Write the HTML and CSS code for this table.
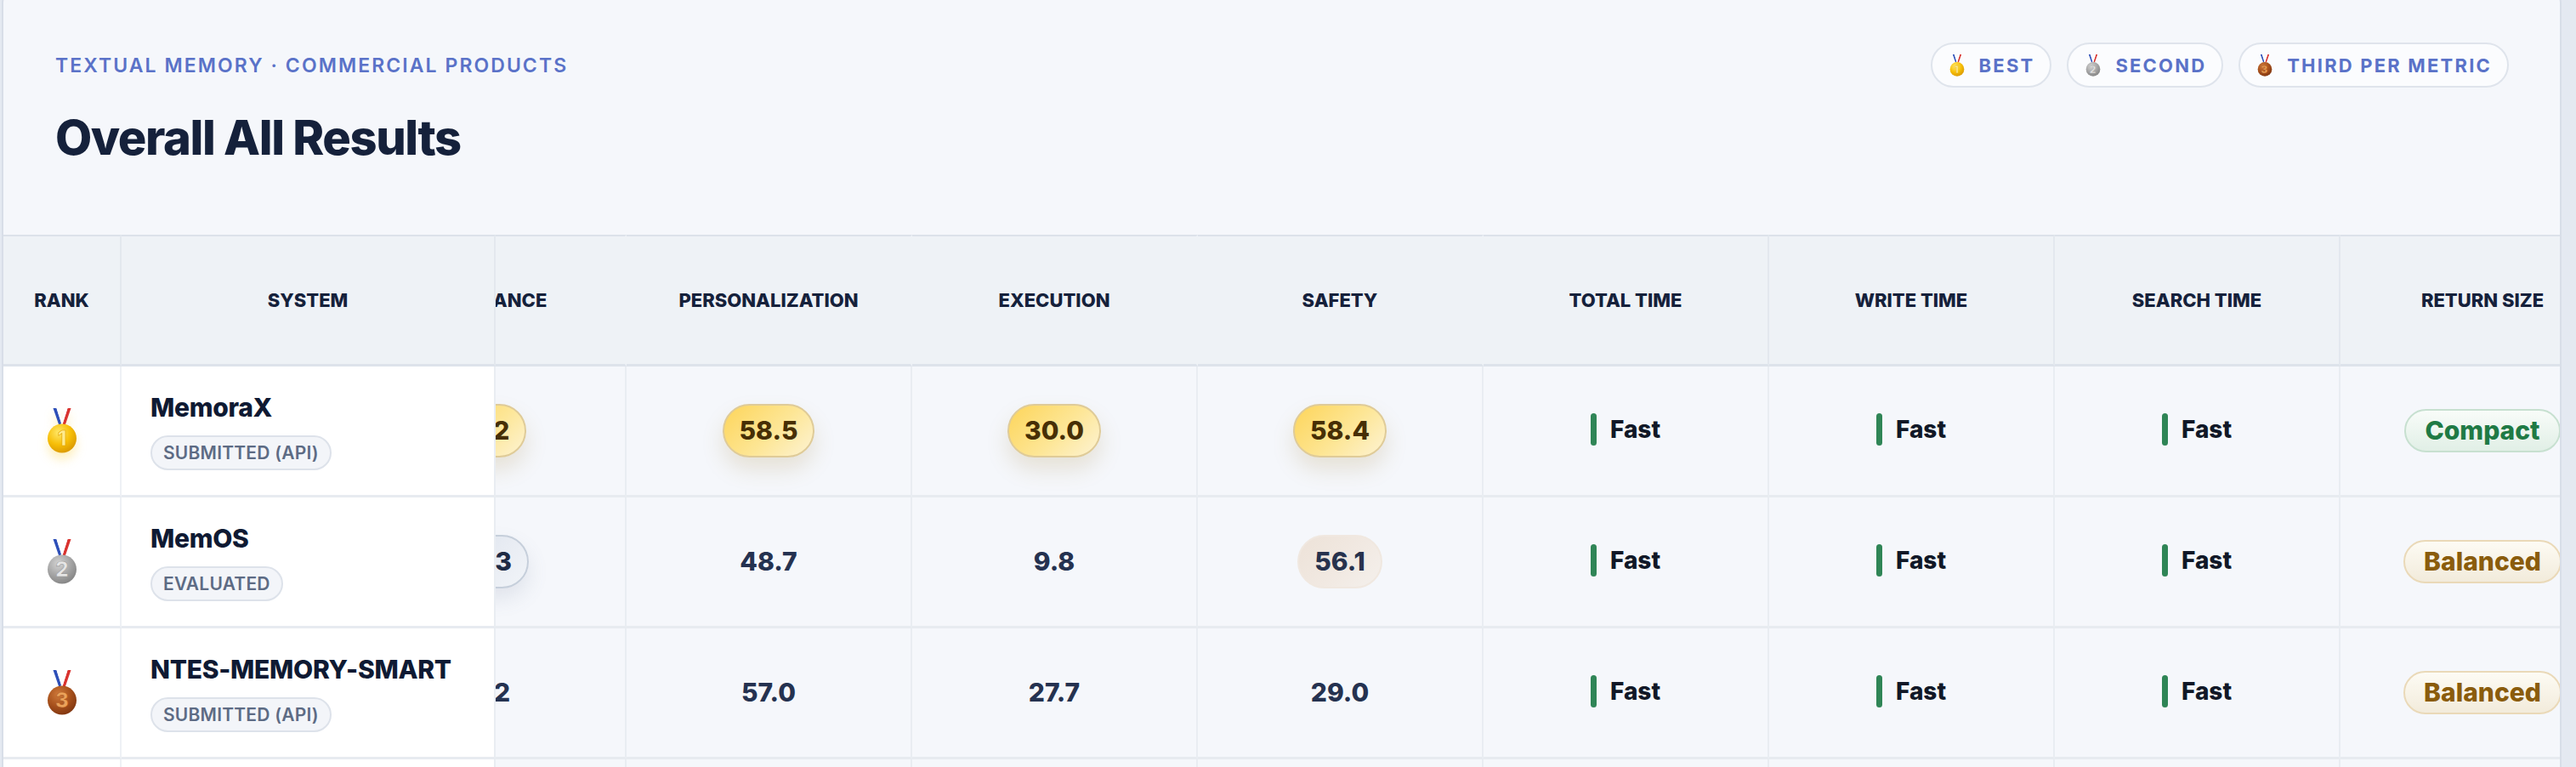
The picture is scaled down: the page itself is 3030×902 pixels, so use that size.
FILE: index.html
```html
<!DOCTYPE html>
<html lang="en">
<head>
<meta charset="utf-8">
<title>Overall All Results</title>
<link rel="stylesheet" href="styles.css">
</head>
<body>
<svg class="defs" aria-hidden="true">
  <defs>
    <radialGradient id="g-gold" cx="38%" cy="30%" r="75%">
      <stop offset="0" stop-color="#ffe86a"/>
      <stop offset="0.55" stop-color="#f7bf08"/>
      <stop offset="1" stop-color="#d99700"/>
    </radialGradient>
    <radialGradient id="g-silver" cx="38%" cy="30%" r="75%">
      <stop offset="0" stop-color="#d4d4d4"/>
      <stop offset="0.55" stop-color="#a6a6a6"/>
      <stop offset="1" stop-color="#838383"/>
    </radialGradient>
    <radialGradient id="g-bronze" cx="38%" cy="30%" r="75%">
      <stop offset="0" stop-color="#d07a3a"/>
      <stop offset="0.55" stop-color="#a7511c"/>
      <stop offset="1" stop-color="#7f3510"/>
    </radialGradient>
    <symbol id="ribbon" viewBox="0 0 36 53">
      <polygon points="7.5,0 11.5,0 17.5,19 14,19" fill="#2d4fb8"/>
      <polygon points="11.5,0 14.5,0 19.5,19 17.5,19" fill="#ffffff"/>
      <polygon points="24.5,0 28.5,0 22,19 18.5,19" fill="#d9332f"/>
      <polygon points="21.5,0 24.5,0 18.5,19 16.5,19" fill="#ffffff"/>
    </symbol>
    <symbol id="medal-1" viewBox="0 0 36 53">
      <use href="#ribbon"/>
      <circle cx="18" cy="35.5" r="17" fill="url(#g-gold)"/>
      <text x="18" y="44" text-anchor="middle" font-family="Inter, sans-serif" font-weight="800" font-size="24" fill="#ffeb8f" stroke="#e0a200" stroke-width="0.6">1</text>
    </symbol>
    <symbol id="medal-2" viewBox="0 0 36 53">
      <use href="#ribbon"/>
      <circle cx="18" cy="35.5" r="17" fill="url(#g-silver)"/>
      <text x="18" y="44" text-anchor="middle" font-family="Inter, sans-serif" font-weight="800" font-size="24" fill="#e6e6e6" stroke="#9a9a9a" stroke-width="0.6">2</text>
    </symbol>
    <symbol id="medal-3" viewBox="0 0 36 53">
      <use href="#ribbon"/>
      <circle cx="18" cy="35.5" r="17" fill="url(#g-bronze)"/>
      <text x="18" y="44" text-anchor="middle" font-family="Inter, sans-serif" font-weight="800" font-size="24" fill="#eba25a" stroke="#b05a22" stroke-width="0.6">3</text>
    </symbol>
  </defs>
</svg>

<section class="card">
  <header class="card-head">
    <div class="head-top">
      <p class="eyebrow">Textual Memory · Commercial Products</p>
      <div class="legend">
        <span class="legend-pill"><svg class="legend-medal"><use href="#medal-1"/></svg>Best</span>
        <span class="legend-pill"><svg class="legend-medal"><use href="#medal-2"/></svg>Second</span>
        <span class="legend-pill"><svg class="legend-medal"><use href="#medal-3"/></svg>Third per metric</span>
      </div>
    </div>
    <h1 class="title">Overall All Results</h1>
  </header>

  <div class="table-wrap" id="tableWrap">
    <table class="board">
      <thead>
        <tr>
          <th class="w-rank sticky-rank">Rank</th>
          <th class="w-sys sticky-sys">System</th>
          <th class="w-metric open">Compliance</th>
          <th class="w-metric open">Personalization</th>
          <th class="w-metric open">Execution</th>
          <th class="w-metric open">Safety</th>
          <th class="w-metric">Total Time</th>
          <th class="w-metric">Write Time</th>
          <th class="w-metric">Search Time</th>
          <th class="w-metric">Return Size</th>
        </tr>
      </thead>
      <tbody>
        <tr>
          <td class="sticky-rank"><svg class="rank-medal gold-glow"><use href="#medal-1"/></svg></td>
          <td class="sticky-sys"><div class="name">MemoraX</div><span class="badge">Submitted (API)</span></td>
          <td><span class="score gold">61.2</span></td>
          <td><span class="score gold">58.5</span></td>
          <td><span class="score gold">30.0</span></td>
          <td><span class="score gold">58.4</span></td>
          <td><span class="speed">Fast</span></td>
          <td><span class="speed">Fast</span></td>
          <td><span class="speed">Fast</span></td>
          <td><span class="size compact">Compact</span></td>
        </tr>
        <tr>
          <td class="sticky-rank"><svg class="rank-medal"><use href="#medal-2"/></svg></td>
          <td class="sticky-sys"><div class="name">MemOS</div><span class="badge">Evaluated</span></td>
          <td><span class="score silver">55.3</span></td>
          <td><span class="score">48.7</span></td>
          <td><span class="score">9.8</span></td>
          <td><span class="score bronze">56.1</span></td>
          <td><span class="speed">Fast</span></td>
          <td><span class="speed">Fast</span></td>
          <td><span class="speed">Fast</span></td>
          <td><span class="size balanced">Balanced</span></td>
        </tr>
        <tr>
          <td class="sticky-rank"><svg class="rank-medal"><use href="#medal-3"/></svg></td>
          <td class="sticky-sys"><div class="name">NTES-MEMORY-SMART</div><span class="badge">Submitted (API)</span></td>
          <td><span class="score">47.2</span></td>
          <td><span class="score">57.0</span></td>
          <td><span class="score">27.7</span></td>
          <td><span class="score">29.0</span></td>
          <td><span class="speed">Fast</span></td>
          <td><span class="speed">Fast</span></td>
          <td><span class="speed">Fast</span></td>
          <td><span class="size balanced">Balanced</span></td>
        </tr>
        <tr>
          <td class="sticky-rank"><span class="rank-num">4</span></td>
          <td class="sticky-sys"><div class="name">Mem0</div><span class="badge">Evaluated</span></td>
          <td><span class="score bronze">52.4</span></td>
          <td><span class="score silver">57.9</span></td>
          <td><span class="score silver">28.6</span></td>
          <td><span class="score">27.5</span></td>
          <td><span class="speed">Fast</span></td>
          <td><span class="speed">Fast</span></td>
          <td><span class="speed">Fast</span></td>
          <td><span class="size balanced">Balanced</span></td>
        </tr>
      </tbody>
    </table>
  </div>
</section>
<script src="script.js"></script>
</body>
</html>
```

FILE: styles.css
```css
* { box-sizing: border-box; }

html, body {
  margin: 0;
  overflow: hidden;
}

body {
  background: #e4e9f1;
  font-family: Inter, "Noto Sans", "Liberation Sans", sans-serif;
  color: #15213b;
}

.defs {
  display: block;
  width: 0;
  height: 0;
  overflow: hidden;
}

.card {
  margin: -20px 17px 0 2px;
  border: 2px solid #d8dee8;
  border-radius: 24px;
  background: #f5f7fb;
  overflow: hidden;
}

.card-head {
  padding: 68px 60px 80px 61px;
}

.head-top {
  display: flex;
  align-items: center;
  justify-content: space-between;
}

.eyebrow {
  margin: 0;
  font-size: 23px;
  line-height: 28px;
  font-weight: 600;
  letter-spacing: 0.09em;
  text-transform: uppercase;
  color: #5a72c8;
}

.legend {
  display: flex;
  gap: 18px;
}

.legend-pill {
  display: flex;
  align-items: center;
  gap: 17px;
  height: 53px;
  padding: 0 18px 0 20px;
  border: 2px solid #dfe4ec;
  border-radius: 999px;
  background: #fbfcfe;
  font-size: 22px;
  font-weight: 700;
  letter-spacing: 0.1em;
  text-transform: uppercase;
  color: #5a72c8;
}

.legend-medal {
  width: 18px;
  height: 26px;
}

.title {
  margin: 26px 0 0;
  font-size: 56px;
  line-height: 1.2;
  font-weight: 800;
  letter-spacing: -0.026em;
  color: #15213b;
}

.table-wrap {
  overflow-x: auto;
  scrollbar-width: none;
}

.table-wrap::-webkit-scrollbar { display: none; }

.board {
  border-collapse: separate;
  border-spacing: 0;
  table-layout: fixed;
  width: 3267px;
}

.board th {
  height: 155px;
  padding: 0 10px;
  background: #eef2f6;
  border-top: 2px solid #dce2ea;
  border-bottom: 3px solid #dde3eb;
  border-right: 2px solid #e3e8ee;
  font-size: 22px;
  font-weight: 800;
  letter-spacing: 0;
  text-transform: uppercase;
  text-align: center;
  vertical-align: middle;
  white-space: nowrap;
  color: #15213b;
}

.board th.open {
  border-right-color: #eef2f6;
}

.w-rank { width: 139px; }
.w-sys { width: 440px; }
.w-metric { width: 336px; }

.board td {
  height: 154px;
  padding: 0 10px;
  background: #f5f7fb;
  border-bottom: 3px solid #e7ebf0;
  border-right: 2px solid #e9edf2;
  text-align: center;
  vertical-align: middle;
  white-space: nowrap;
}

.sticky-rank {
  position: sticky;
  left: 0;
  z-index: 2;
}

.sticky-sys {
  position: sticky;
  left: 139px;
  z-index: 2;
}

.board td.sticky-rank {
  background: #ffffff;
  border-right-color: #eef1f5;
}

.board td.sticky-sys {
  background: #ffffff;
  text-align: left;
  padding-left: 34px;
}

.rank-medal {
  display: block;
  width: 36px;
  height: 53px;
  margin: 0 auto;
}

.gold-glow {
  filter: drop-shadow(0 8px 6px rgba(250, 200, 30, 0.28));
}

.rank-num {
  font-size: 28px;
  font-weight: 800;
  color: #5d6b84;
}

.name {
  font-size: 30px;
  line-height: 36px;
  font-weight: 800;
  letter-spacing: -0.01em;
  color: #0f1a33;
}

.badge {
  display: inline-block;
  margin-top: 15px;
  padding: 6px 13px;
  border: 2px solid #dde2ea;
  border-radius: 999px;
  background: #f3f5f9;
  font-size: 21px;
  line-height: 25px;
  font-weight: 600;
  letter-spacing: 0.01em;
  text-transform: uppercase;
  color: #5d6b84;
}

.score {
  display: inline-block;
  font-size: 30px;
  line-height: 37px;
  font-weight: 800;
  color: #253250;
}

.score.gold,
.score.silver,
.score.bronze {
  padding: 11px 18px;
  border: 2px solid transparent;
  border-radius: 999px;
}

.score.gold {
  border-color: #dfcb98;
  background: linear-gradient(135deg, #fdd55a 0%, #fde696 55%, #fdf3d3 100%);
  color: #472f05;
  box-shadow: 0 14px 26px rgba(160, 130, 50, 0.18);
}

.score.silver {
  border-color: #c6cfdb;
  background: linear-gradient(135deg, #d8dfea 0%, #e8ecf3 55%, #f1f4f8 100%);
  color: #1f2b45;
  box-shadow: 0 12px 24px rgba(100, 116, 139, 0.14);
}

.score.bronze {
  border-color: #f0e8e0;
  background: linear-gradient(135deg, #ede2d8 0%, #f1e9e2 55%, #f4f0ec 100%);
  color: #27324d;
}

.speed {
  display: inline-flex;
  align-items: center;
  gap: 16px;
  font-size: 28px;
  line-height: 36px;
  font-weight: 800;
  color: #111827;
}

.speed::before {
  content: "";
  width: 7px;
  height: 38px;
  border-radius: 4px;
  background: #2f8556;
}

.size {
  display: inline-block;
  padding: 5px 22px;
  border: 2px solid transparent;
  border-radius: 999px;
  font-size: 30px;
  line-height: 37px;
  font-weight: 800;
}

.size.compact {
  border-color: #c7e0d0;
  background: linear-gradient(180deg, #f8fcf9 0%, #e1efe6 100%);
  color: #1f7a45;
}

.size.balanced {
  border-color: #ead9b8;
  background: linear-gradient(180deg, #fdfbf4 0%, #f2ebdb 100%);
  color: #8a5c0c;
}
```

FILE: script.js
```js
document.getElementById('tableWrap').scrollLeft = 182;
```
